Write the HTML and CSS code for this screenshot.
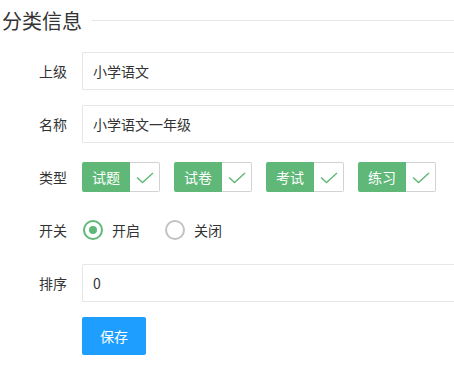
FILE: index.html
```html
<!DOCTYPE html>
<html lang="zh-CN">
<head>
    <meta charset="UTF-8">
    <meta name="viewport" content="width=device-width, initial-scale=1.0">
    <title>分类信息</title>
    <link rel="stylesheet" href="styles.css">
</head>
<body>
    <div class="page">
        <div class="field-title">
            <span class="legend">分类信息</span>
            <span class="rule"></span>
        </div>

        <form class="form">
            <div class="form-item">
                <label class="form-label">上级</label>
                <div class="input-block">
                    <input class="input" type="text" value="小学语文">
                </div>
            </div>
            <div class="form-item">
                <label class="form-label">名称</label>
                <div class="input-block">
                    <input class="input" type="text" value="小学语文一年级">
                </div>
            </div>
            <div class="form-item">
                <label class="form-label">类型</label>
                <div class="input-block checks">
                    <div class="checkbox"><span>试题</span><i><svg width="18" height="12" viewBox="0 0 18 12"><path d="M1 5.5 L6.5 10.5 L17 1" fill="none" stroke="#5FB878" stroke-width="1.4"/></svg></i></div>
                    <div class="checkbox"><span>试卷</span><i><svg width="18" height="12" viewBox="0 0 18 12"><path d="M1 5.5 L6.5 10.5 L17 1" fill="none" stroke="#5FB878" stroke-width="1.4"/></svg></i></div>
                    <div class="checkbox"><span>考试</span><i><svg width="18" height="12" viewBox="0 0 18 12"><path d="M1 5.5 L6.5 10.5 L17 1" fill="none" stroke="#5FB878" stroke-width="1.4"/></svg></i></div>
                    <div class="checkbox"><span>练习</span><i><svg width="18" height="12" viewBox="0 0 18 12"><path d="M1 5.5 L6.5 10.5 L17 1" fill="none" stroke="#5FB878" stroke-width="1.4"/></svg></i></div>
                </div>
            </div>
            <div class="form-item">
                <label class="form-label">开关</label>
                <div class="input-block radios">
                    <div class="radio checked"><i></i><span>开启</span></div>
                    <div class="radio"><i></i><span>关闭</span></div>
                </div>
            </div>
            <div class="form-item">
                <label class="form-label">排序</label>
                <div class="input-block">
                    <input class="input" type="text" value="0">
                </div>
            </div>
            <div class="form-item">
                <div class="form-label"></div>
                <div class="input-block">
                    <button class="btn" type="button">保存</button>
                </div>
            </div>
        </form>
    </div>
</body>
</html>
```

FILE: styles.css
```css
* {
    margin: 0;
    padding: 0;
    box-sizing: border-box;
}

body {
    background: #fff;
    color: #333;
    font-family: "Microsoft YaHei", "Noto Sans CJK SC", "Noto Sans", sans-serif;
    font-size: 14px;
    overflow: hidden;
}

.page {
    width: 100%;
}

.field-title {
    display: flex;
    align-items: center;
    height: 40px;
    padding-left: 2px;
    margin-bottom: 12px;
}

.legend {
    font-size: 20px;
    font-weight: 400;
    color: #333;
    padding-right: 10px;
    white-space: nowrap;
}

.rule {
    flex: 1;
    height: 1px;
    background: #e6e6e6;
}

.form-item {
    display: flex;
    margin-bottom: 15px;
}

.form-label {
    width: 82px;
    flex-shrink: 0;
    padding-right: 15px;
    text-align: right;
    line-height: 38px;
    color: #333;
}

.input-block {
    flex: 1;
    min-height: 38px;
}

/* the inputs run on past the right edge of the frame */
.input {
    display: block;
    width: 100%;
    height: 38px;
    padding-left: 10px;
    border: 1px solid #e6e6e6;
    border-right: none;
    border-radius: 2px 0 0 2px;
    background: #fff;
    color: #333;
    font-family: inherit;
    font-size: 14px;
    outline: none;
}

.checks {
    display: flex;
    gap: 14px;
    padding-top: 4px;
}

.checkbox {
    display: flex;
    height: 30px;
}

.checkbox span {
    width: 48px;
    background: #5FB878;
    color: #fff;
    line-height: 30px;
    text-align: center;
    border-radius: 2px 0 0 2px;
}

.checkbox i {
    width: 30px;
    display: flex;
    align-items: center;
    justify-content: center;
    border: 1px solid #d2d2d2;
    border-left: none;
    border-radius: 0 2px 2px 0;
}

.checkbox svg {
    display: block;
    margin-top: 1px;
}

.radios {
    display: flex;
    align-items: center;
}

.radio {
    display: flex;
    align-items: center;
    margin-right: 24px;
    margin-left: 1px;
}

.radio i {
    width: 20px;
    height: 20px;
    border: 2px solid #c2c2c2;
    border-radius: 50%;
    margin-right: 9px;
    position: relative;
}

.radio.checked i {
    border-color: #5FB878;
}

.radio.checked i:after {
    content: '';
    position: absolute;
    top: 50%;
    left: 50%;
    width: 8px;
    height: 8px;
    background: #5FB878;
    border-radius: 50%;
    transform: translate(-50%, -50%);
}

.btn {
    height: 38px;
    padding: 0 18px;
    border: none;
    border-radius: 2px;
    background: #1E9FFF;
    color: #fff;
    font-family: inherit;
    font-size: 14px;
    cursor: pointer;
}
```
